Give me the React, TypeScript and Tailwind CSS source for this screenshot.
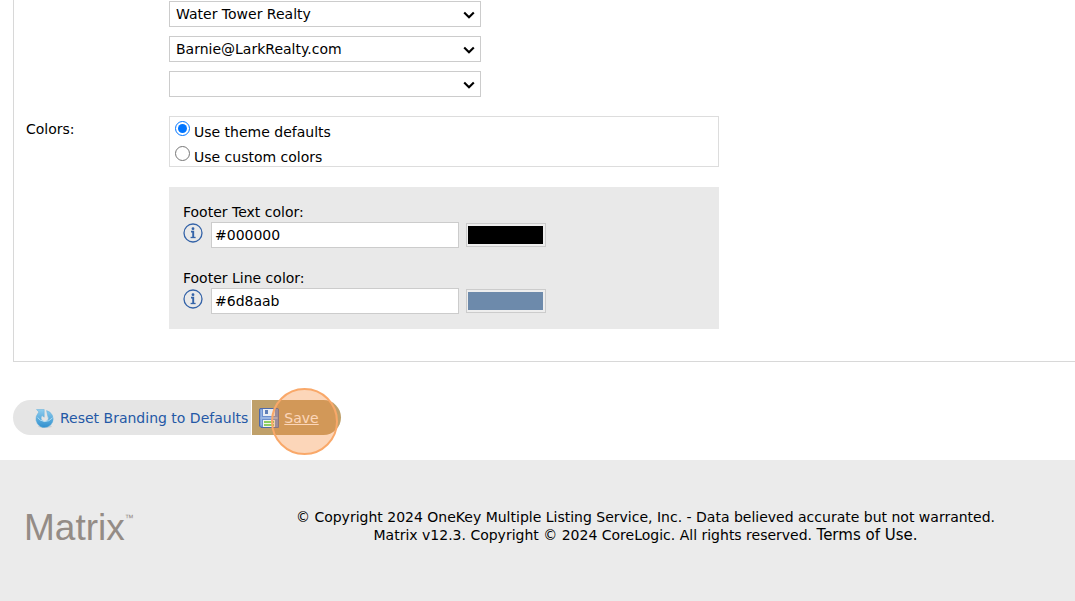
import { useState } from "react";

const ResetIcon = () => (
  <svg width="20" height="20" viewBox="0 0 20 20" aria-hidden="true">
    <defs>
      <linearGradient id="resetFill" x1="0" y1="0" x2="0" y2="1">
        <stop offset="0" stopColor="#8fcdee" />
        <stop offset="1" stopColor="#2f8fce" />
      </linearGradient>
    </defs>
    <ellipse cx="10" cy="18.4" rx="7" ry="1.4" fill="#cbd0d3" />
    <path
      d="M1.5 1.5H9.2V9.2L7.2 7.6A3.6 3.6 0 1 0 12.8 8.2L11.6 2.6A8.6 8.6 0 1 1 2.8 5.6L3.9 4Z"
      fill="url(#resetFill)"
      stroke="#62aedb"
      strokeWidth="0.5"
    />
    <path d="M2.6 9.6Q5 13 9.5 13.4T17.6 9.8" fill="none" stroke="#b5e0f5" strokeWidth="0.9" />
  </svg>
);

const SaveIcon = () => (
  <svg width="20" height="20" viewBox="0 0 20 20" aria-hidden="true">
    <path d="M1 0.5H19L19.5 1V19.5H2L0.5 18V1Z" fill="#6c90cf" stroke="#4f6aa8" />
    <rect x="1.5" y="1.5" width="1.5" height="16" fill="#94b2e2" />
    <rect x="4" y="1" width="12" height="7" fill="#e9eef4" />
    <rect x="6" y="2" width="3" height="4" fill="#5f7fb8" />
    <rect x="1.5" y="9" width="17" height="2" fill="#9bb7e3" />
    <rect x="4" y="12" width="12" height="7" fill="#f2f5ee" />
    <rect x="5" y="13" width="10" height="2" fill="#8bcf62" />
    <rect x="5" y="16" width="10" height="2" fill="#8bcf62" />
  </svg>
);

const InfoIcon = () => (
  <svg width="20" height="20" viewBox="0 0 20 20" aria-hidden="true">
    <circle cx="10" cy="10" r="9" fill="none" stroke="#3463a8" strokeWidth="1.3" />
    <circle cx="10" cy="5.7" r="1.4" fill="#3463a8" />
    <path d="M8 8.6H10.2V14.4" fill="none" stroke="#3463a8" strokeWidth="1.9" />
    <path d="M7.6 14.5H12.6" fill="none" stroke="#3463a8" strokeWidth="1.3" />
  </svg>
);

const SelectArrow = () => (
  <svg
    width="12"
    height="8"
    viewBox="0 0 12 8"
    className="pointer-events-none absolute right-[6px] top-[10px]"
    aria-hidden="true"
  >
    <path d="M1.2 1.4 6 6.2 10.8 1.4" fill="none" stroke="#000" strokeWidth="2.1" />
  </svg>
);

const ColorField = ({
  id,
  label,
  value,
  onChange,
}: {
  id: string;
  label: string;
  value: string;
  onChange: (value: string) => void;
}) => (
  <div>
    <label htmlFor={id} className="block leading-5">
      {label}
    </label>
    <div className="flex items-center">
      <button type="button" aria-label={`About ${label}`} className="mr-2 -mt-1">
        <InfoIcon />
      </button>
      <input
        id={id}
        type="text"
        value={value}
        onChange={(e) => onChange(e.target.value)}
        className="h-[26px] w-[248px] border border-[#ccc] bg-white px-[3px]"
      />
      <div className="ml-[7px] h-6 w-20 border border-[#ccc] bg-[#eee] py-[2px] pl-px pr-[2px]">
        <div className="h-full" style={{ backgroundColor: value }} />
      </div>
    </div>
  </div>
);

const selects = [
  { name: "Office", value: "Water Tower Realty" },
  { name: "Email", value: "Barnie@LarkRealty.com" },
  { name: "Other", value: "" },
];

const App = () => {
  const [mode, setMode] = useState("theme");
  const [textColor, setTextColor] = useState("#000000");
  const [lineColor, setLineColor] = useState("#6d8aab");

  return (
    <div className="flex min-h-screen flex-col bg-white font-['Verdana','DejaVu_Sans',sans-serif] text-sm text-black">
      <main className="pl-[13px]">
        <div className="border-b border-l border-[#d8d8d8] pb-8 pl-3 pt-px">
          <div className="ml-[143px] flex flex-col items-start gap-[9px]">
            {selects.map((item) => (
              <div key={item.name} className="relative w-[312px]">
                <select
                  aria-label={item.name}
                  className="block h-[26px] w-full appearance-none border border-[#ccc] bg-white pl-[6px] pr-6"
                >
                  <option>{item.value}</option>
                </select>
                <SelectArrow />
              </div>
            ))}
          </div>

          <div className="mt-[19px] flex">
            <div className="w-[143px] shrink-0 pt-[3px]">Colors:</div>
            <div className="w-[550px]">
              <div
                role="radiogroup"
                aria-label="Colors"
                className="flex h-[51px] flex-col border border-[#ddd] pl-[5px]"
              >
                <label className="flex h-[25px] gap-1">
                  <input
                    type="radio"
                    name="mode"
                    className="mt-1 size-[15px]"
                    checked={mode === "theme"}
                    onChange={() => setMode("theme")}
                  />
                  <span className="pt-[5px]">Use theme defaults</span>
                </label>
                <label className="flex h-[25px] gap-1">
                  <input
                    type="radio"
                    name="mode"
                    className="mt-1 size-[15px]"
                    checked={mode === "custom"}
                    onChange={() => setMode("custom")}
                  />
                  <span className="pt-[5px]">Use custom colors</span>
                </label>
              </div>

              <div className="mt-5 flex flex-col gap-5 bg-[#e9e9e9] py-[15px] pl-[14px]">
                <ColorField
                  id="text-color"
                  label="Footer Text color:"
                  value={textColor}
                  onChange={setTextColor}
                />
                <ColorField
                  id="line-color"
                  label="Footer Line color:"
                  value={lineColor}
                  onChange={setLineColor}
                />
              </div>
            </div>
          </div>
        </div>

        <div className="mb-[25px] mt-[38px] flex">
          <button
            type="button"
            className="mr-px flex h-[35px] items-center gap-[5px] rounded-l-full bg-[#e5e5e5] pl-[22px] pr-[3px] text-[#2458a6]"
          >
            <ResetIcon />
            Reset Branding to Defaults
          </button>
          <button
            type="button"
            className="relative flex h-[35px] items-center gap-[5px] rounded-r-full bg-[#bfa06a] pl-[7px] pr-[22px] text-white underline"
          >
            <SaveIcon />
            Save
            <span className="pointer-events-none absolute -top-3 left-[19px] size-[67px] rounded-full border-2 border-[#f9a869] bg-[#f68a36]/35" />
          </button>
        </div>
      </main>

      <footer className="flex grow items-start bg-[#ebebeb] pl-6">
        <div className="mt-12 flex w-48 shrink-0 items-start font-['Liberation_Sans',Arial,sans-serif] text-[#948c86]">
          <span className="text-[37px] leading-10">Matrix</span>
          <span className="mt-1 text-[9px]">™</span>
        </div>
        <p className="mt-12 grow text-center leading-[18px]">
          © Copyright 2024 OneKey Multiple Listing Service, Inc. - Data believed accurate but not
          warranted.
          <br />
          Matrix v12.3. Copyright © 2024 CoreLogic. All rights reserved.{" "}
          <a href="#" className="text-[15px]">
            Terms of Use.
          </a>
        </p>
      </footer>
    </div>
  );
};

export default App;
